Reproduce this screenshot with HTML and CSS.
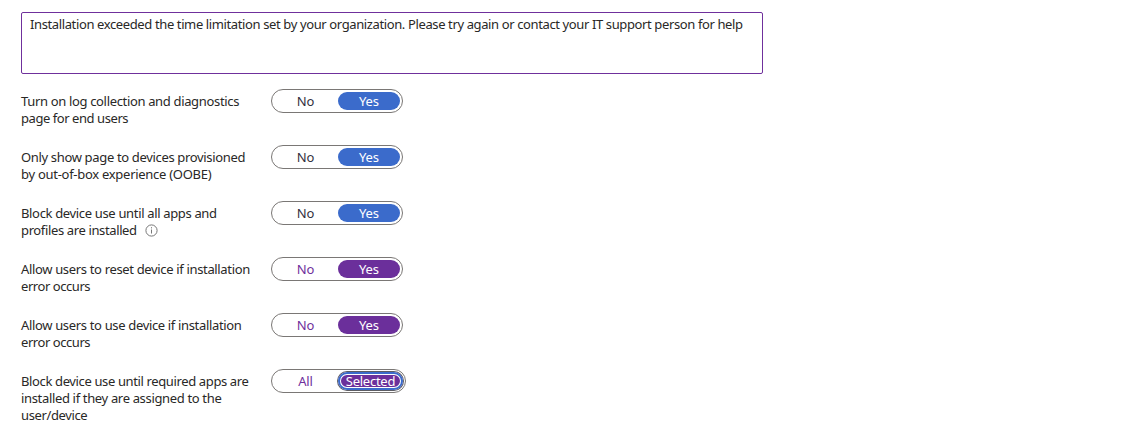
FILE: index.html
```html
<!DOCTYPE html>
<html lang="en">
<head>
<meta charset="utf-8">
<title>Enrollment status page settings</title>
<link rel="stylesheet" href="styles.css">
</head>
<body>
<main class="form">
  <div class="message">Installation exceeded the time limitation set by your organization. Please try again or contact your IT support person for help</div>
  <div class="row"><div class="label"><div>Turn on log collection and diagnostics</div><div class="tight">page for end users</div></div><div class="toggle"><span class="off">No</span><span class="on">Yes</span></div></div>
  <div class="row"><div class="label"><div>Only show page to devices provisioned</div><div class="loose">by out-of-box experience (OOBE)</div></div><div class="toggle"><span class="off">No</span><span class="on">Yes</span></div></div>
  <div class="row"><div class="label"><div>Block device use until all apps and</div><div class="with-info snug">profiles are installed<svg class="info" viewBox="0 0 13 13"><circle cx="6.5" cy="6.5" r="5.6" fill="none" stroke="#777"/><path d="M6.5 5.5v4M6.5 3.2v1.2" stroke="#777"/></svg></div></div><div class="toggle"><span class="off">No</span><span class="on">Yes</span></div></div>
  <div class="row"><div class="label"><div>Allow users to reset device if installation</div><div class="tight">error occurs</div></div><div class="toggle purple"><span class="off">No</span><span class="on">Yes</span></div></div>
  <div class="row"><div class="label"><div>Allow users to use device if installation</div><div class="tight">error occurs</div></div><div class="toggle purple"><span class="off">No</span><span class="on">Yes</span></div></div>
  <div class="row"><div class="label"><div class="snug">Block device use until required apps are</div><div>installed if they are assigned to the</div><div class="snug">user/device</div></div><div class="toggle purple wide"><span class="off">All</span><span class="on focus">Selected</span></div></div>
</main>
</body>
</html>
```
FILE: styles.css
```css
* { box-sizing: border-box; }
body { margin: 0; background: #fff; color: #292827; font: 13px/17px "Noto Sans", sans-serif; }
.form { padding: 12px 0 0 21px; }
.message { width: 742px; height: 62px; border: 1px solid #6f309c; border-radius: 2px; padding: 3px 8px; margin-bottom: 15px; white-space: nowrap; letter-spacing: -0.38px; }
.row { display: flex; height: 56px; }
.label { width: 250px; padding-top: 4px; white-space: nowrap; letter-spacing: -0.34px; }
.snug { letter-spacing: -0.37px; }
.tight { letter-spacing: -0.44px; }
.loose { letter-spacing: -0.28px; }
.with-info { display: flex; align-items: center; gap: 8px; }
.info { width: 13px; height: 13px; }
.toggle { display: flex; width: 132px; height: 24px; padding: 2px; border: 1px solid #7a7775; border-radius: 12px; line-height: 18px; text-align: center; letter-spacing: -0.1px; }
.toggle.wide { width: 135px; }
.off { width: 64px; padding-right: 1px; color: #323040; }
.on { flex: 1; border-radius: 9px; background: #3b6bcb; color: #fff; }
.purple .off { color: #6f309c; }
.purple .on { background: #6b2f9b; }
.purple .focus { letter-spacing: -0.25px; box-shadow: 0 0 0 1px #5d5d63, inset 0 0 0 2px #3b6bcb, inset 0 0 0 3px #fff; }
```
